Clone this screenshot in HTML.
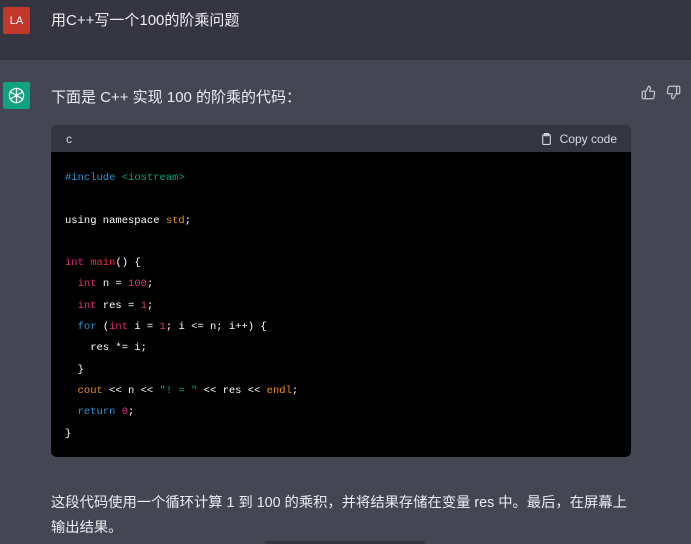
<!DOCTYPE html>
<html><head><meta charset="utf-8"><style>
*{margin:0;padding:0;box-sizing:border-box}
body{width:691px;height:544px;overflow:hidden;background:#444654;font-family:"Liberation Sans","Noto Sans CJK SC",sans-serif;color:#ececf1;position:relative}
.top{position:absolute;left:0;top:0;width:691px;height:60px;background:#343541}
.av{position:absolute;left:3px;width:27px;height:27px;border-radius:2px;display:flex;align-items:center;justify-content:center}
.t{position:absolute;left:51px;font-size:15px;white-space:nowrap}
.code{position:absolute;left:51px;top:125px;width:580px;height:332px;border-radius:6px;overflow:hidden;background:#000}
.hd{height:27px;background:#343541;color:#d9d9e3;font-size:12px;display:flex;align-items:center;justify-content:space-between;padding:0 14px 0 15px}
pre{font-family:"Liberation Mono",monospace;font-size:10.5px;color:#fff;position:absolute;left:14px;top:43px;line-height:21.3px}
.k{color:#2e95d3}.r{color:#df3079}.y{color:#e9950c}.g{color:#00a67d}.m{color:#f22c3d}
</style></head><body>
<div class="top"></div>
<div class="av" style="top:7px;background:#c0392b;font-size:11px;color:#fff">LA</div>
<div class="t" style="top:9px">用C++写一个100的阶乘问题</div>
<div class="av" style="top:82px;background:#10a37f">
<svg width="19" height="19" viewBox="0 0 24 24" fill="none" stroke="#fff" stroke-width="1.6"><circle cx="12" cy="12" r="9"/><path d="M12 3v9l7.8 4.5M12 12l-7.8 4.5M12 12l7.8-4.5M12 21v-9M4.2 7.5L12 12"/></svg></div>
<div class="t" style="top:86px">下面是 C++ 实现 100 的阶乘的代码：</div>
<svg style="position:absolute;left:641px;top:85px" width="15" height="15" viewBox="0 0 24 24" fill="none" stroke="#c5c5d2" stroke-width="2"><path d="M7 10v12M15 5.9L14 10h5.8a2 2 0 0 1 2 2.4l-1.4 8A2 2 0 0 1 18.4 22H4a2 2 0 0 1-2-2v-8a2 2 0 0 1 2-2h2.8a2 2 0 0 0 1.8-1.1L12 2a3 3 0 0 1 3 3.9z"/></svg>
<svg style="position:absolute;left:666px;top:85px" width="15" height="15" viewBox="0 0 24 24" fill="none" stroke="#c5c5d2" stroke-width="2"><path d="M17 14V2M9 18.1L10 14H4.2a2 2 0 0 1-2-2.4l1.4-8A2 2 0 0 1 5.6 2H20a2 2 0 0 1 2 2v8a2 2 0 0 1-2 2h-2.8a2 2 0 0 0-1.8 1.1L12 22a3 3 0 0 1-3-3.9z"/></svg>
<div class="code"><div class="hd"><span>c</span><span style="display:flex;align-items:center;gap:7px"><svg width="13" height="14" viewBox="0 0 24 24" fill="none" stroke="#d9d9e3" stroke-width="2"><rect x="5" y="4" width="14" height="18" rx="2"/><rect x="8" y="2" width="8" height="4" rx="1"/></svg>Copy code</span></div>
<pre><span class="k">#include</span> <span class="g">&lt;iostream&gt;</span>

using namespace <span class="y">std</span>;

<span class="r">int</span> <span class="m">main</span>() {
  <span class="r">int</span> n = <span class="r">100</span>;
  <span class="r">int</span> res = <span class="r">1</span>;
  <span class="k">for</span> (<span class="r">int</span> i = <span class="r">1</span>; i &lt;= n; i++) {
    res *= i;
  }
  <span class="y">cout</span> &lt;&lt; n &lt;&lt; <span class="g">"! = "</span> &lt;&lt; res &lt;&lt; <span class="y">endl</span>;
  <span class="k">return</span> <span class="r">0</span>;
}</pre></div>
<div class="t" style="top:491px;font-size:14.3px">这段代码使用一个循环计算 1 到 100 的乘积，并将结果存储在变量 res 中。最后，在屏幕上</div>
<div class="t" style="top:516px;font-size:14.3px">输出结果。</div>
<div style="position:absolute;left:265px;top:541px;width:160px;height:3px;background:#343541;border-radius:2px"></div>
</body></html>
